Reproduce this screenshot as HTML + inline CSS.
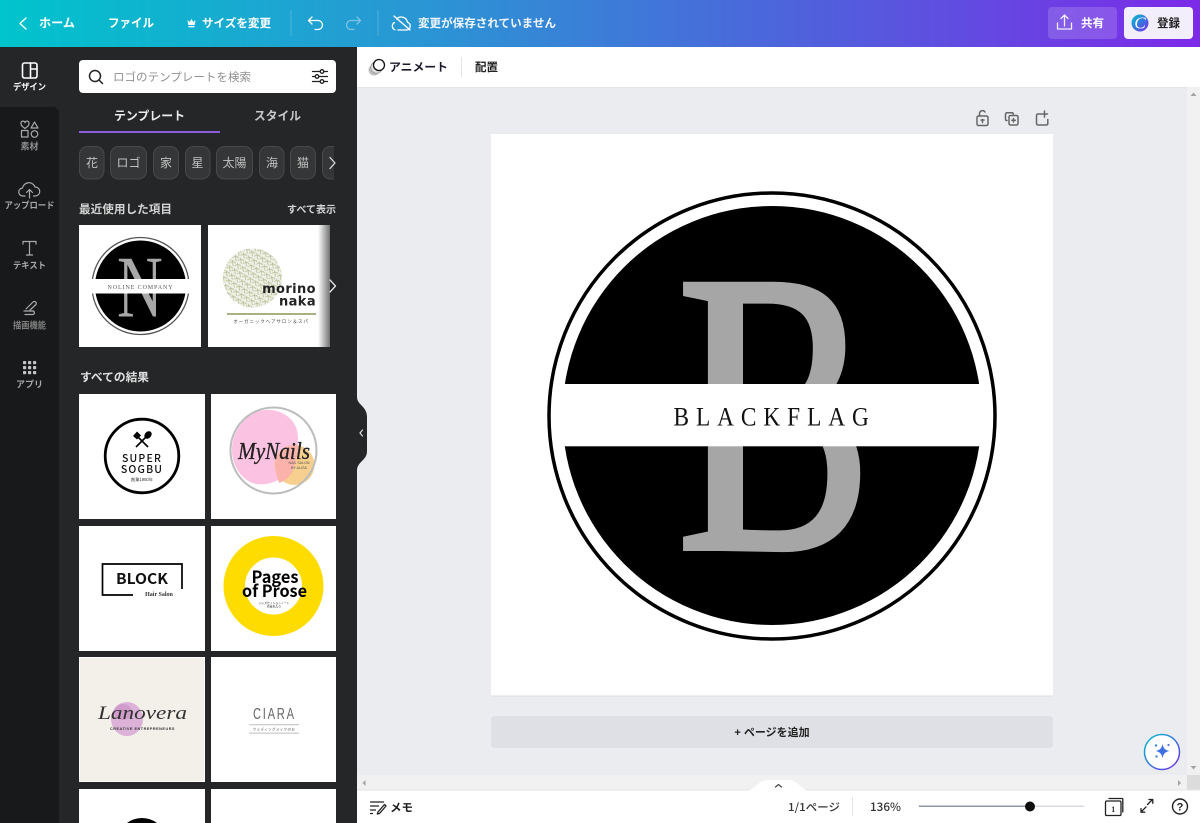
<!DOCTYPE html>
<html lang="ja"><head><meta charset="utf-8"><title>Canva</title>
<style>
html,body{margin:0;padding:0;width:1200px;height:823px;overflow:hidden;background:#ebecf0}
svg{display:block;position:absolute;left:0;top:0}
text{font-family:"Liberation Sans","Noto Sans CJK JP",sans-serif}
.b{font-weight:700}
.s{font-family:"Liberation Serif","Noto Serif CJK SC",serif}
.n{font-family:"Noto Sans CJK JP",sans-serif}
.w{fill:#fff}
.rail{fill:#a8a8a8;font-size:9px;font-weight:700;text-anchor:middle}
.chip{fill:#353637;stroke:#48494a}
.cht{fill:#c2c2c2;font-size:12px;text-anchor:middle}
.ic{fill:none;stroke:#fff;stroke-width:1.3;stroke-linecap:round;stroke-linejoin:round}
.ig{fill:none;stroke:#aaa;stroke-width:1.2;stroke-linecap:round;stroke-linejoin:round}
.id{fill:none;stroke:#222;stroke-width:1.3;stroke-linecap:round;stroke-linejoin:round}
.ie{fill:none;stroke:#666;stroke-width:1.5;stroke-linecap:round;stroke-linejoin:round}
</style></head><body>
<svg width="1200" height="823" viewBox="0 0 1200 823" xmlns="http://www.w3.org/2000/svg">
<defs>
<linearGradient id="hd" x1="0" y1="0" x2="1" y2="0"><stop offset="0" stop-color="#00c4cc"/><stop offset=".35" stop-color="#2a96d4"/><stop offset=".68" stop-color="#5060dc"/><stop offset="1" stop-color="#7d2ae8"/></linearGradient>
<linearGradient id="cg" x1="0" y1="0" x2="1" y2="1"><stop offset="0" stop-color="#00c4cc"/><stop offset=".55" stop-color="#3a6fe0"/><stop offset="1" stop-color="#7d2ae8"/></linearGradient>
<linearGradient id="fade" x1="0" y1="0" x2="1" y2="0"><stop offset="0" stop-color="#252627" stop-opacity="0"/><stop offset="1" stop-color="#252627" stop-opacity=".65"/></linearGradient>
<pattern id="leaf" width="6" height="6" patternUnits="userSpaceOnUse" patternTransform="rotate(30)"><rect width="6" height="6" fill="#eff1e6"/><path d="M0 5Q3 0 6 2.500M1 1Q3.500 4 5 6" fill="none" stroke="#b4bd94" stroke-width=".8"/></pattern>
<clipPath id="bigc"><circle cx="772" cy="415.500" r="209.500"/></clipPath>
<clipPath id="nc"><circle cx="140.500" cy="286" r="45.500"/></clipPath>
</defs>

<!-- base -->
<rect width="1200" height="823" fill="#ebecf0"/>
<rect x="0" y="47" width="357" height="776" fill="#252627"/>
<path d="M0 107H53a6 6 0 0 1 6 6V823H0Z" fill="#18191b"/>

<!-- header -->
<rect width="1200" height="47" fill="url(#hd)"/>
<path class="ic" d="M26 18l-6 5.500 6 5.500"/>
<text x="39" y="27" class="b w" font-size="12" textLength="36" lengthAdjust="spacingAndGlyphs">ホーム</text>
<text x="108" y="27" class="b w" font-size="12" textLength="46" lengthAdjust="spacingAndGlyphs">ファイル</text>
<path d="M187.500 20l2.200 2 1.800-3 1.800 3 2.200-2-.8 5h-6.400z" fill="#fff"/><rect x="188.500" y="26" width="6" height="1.300" fill="#fff"/>
<text x="202" y="27" class="b w" font-size="11.500" textLength="69" lengthAdjust="spacingAndGlyphs">サイズを変更</text>
<rect x="290.500" y="10" width="1" height="26" fill="#fff" opacity=".2"/>
<path class="ic" d="M312 17l-3.500 3.500 3.500 3.500M308.500 20.500H318a4.500 4.500 0 0 1 0 9h-3"/>
<path class="ic" opacity=".4" d="M357 17l3.500 3.500-3.500 3.500M360.500 20.500H351a4.500 4.500 0 0 0 0 9h3"/>
<rect x="377.500" y="10" width="1" height="26" fill="#fff" opacity=".2"/>
<path class="ic" d="M398 30h8.500a4 4 0 0 0 1-7.800 6.500 6.500 0 0 0-11-3.200M394.500 22.500a4 4 0 0 0 .5 7.300M394 16l16 14"/>
<text x="418" y="27" class="b" fill="#f2f6fc" font-size="11.500" textLength="138" lengthAdjust="spacingAndGlyphs">変更が保存されていません</text>

<rect x="1048" y="7" width="69" height="32" rx="4" fill="#fff" fill-opacity=".16"/>
<path class="ic" opacity=".9" d="M1064.500 26V16M1061 18.500l3.500-3.500 3.500 3.500M1057.500 23v6h14v-6"/>
<text x="1081" y="27" class="b w" font-size="11.500" textLength="23" lengthAdjust="spacingAndGlyphs">共有</text>
<rect x="1124" y="7" width="69" height="32" rx="4" fill="#f3eefc"/>
<circle cx="1140" cy="23" r="8.500" fill="url(#cg)"/>
<text x="1140" y="28.500" class="s w" font-size="17" font-style="italic" text-anchor="middle">C</text>
<text x="1157" y="27" class="b" fill="#222" font-size="11.500" textLength="23" lengthAdjust="spacingAndGlyphs">登録</text>

<!-- rail -->
<g class="ic" style="stroke-width:1.600"><rect x="22.500" y="63" width="14.500" height="15" rx="2"/><path d="M30.500 63v15M30.500 69h6.500"/></g>
<text x="29.500" y="90" class="rail" style="fill:#fff" textLength="33" lengthAdjust="spacingAndGlyphs">デザイン</text>
<g class="ig"><path d="M25 128.500c-3.500-2.500-4-3.500-4-5a2 2 0 0 1 4-.8 2 2 0 0 1 4 .8c0 1.500-.500 2.500-4 5z"/><path d="M34.500 122l3.500 6h-7z"/><rect x="21.500" y="130.500" width="6.500" height="6.500"/><circle cx="34.500" cy="134" r="3.300"/></g>
<text x="29.500" y="149.500" class="rail" style="fill:#909090">素材</text>
<g class="ig"><path d="M25 196h-2a4 4 0 0 1-.500-8 6.500 6.500 0 0 1 12.500-1 4.500 4.500 0 0 1 .500 9h-2M29.500 198v-8M26.500 192.500l3-3 3 3"/></g>
<text x="29.500" y="208.500" class="rail" style="fill:#a8a8a8" textLength="50" lengthAdjust="spacingAndGlyphs">アップロード</text>
<g class="ig"><path d="M23 244v-2.500h13v2.500M29.500 241.500V255M26.500 255h6"/></g>
<text x="29.500" y="268.500" class="rail" style="fill:#a8a8a8" textLength="33" lengthAdjust="spacingAndGlyphs">テキスト</text>
<g class="ig"><path d="M26 309l7-7c2-1.500 4 .5 3 2.500l-6 5.500M24 311h9a1.800 1.800 0 0 1 0 3.500h-8"/></g>
<text x="29.500" y="328.500" class="rail" style="fill:#808080" textLength="33" lengthAdjust="spacingAndGlyphs">描画機能</text>
<g fill="#c4c4c4"><rect x="23" y="361" width="3.200" height="3.200" rx=".8"/><rect x="28" y="361" width="3.200" height="3.200" rx=".8"/><rect x="33" y="361" width="3.200" height="3.200" rx=".8"/><rect x="23" y="366" width="3.200" height="3.200" rx=".8"/><rect x="28" y="366" width="3.200" height="3.200" rx=".8"/><rect x="33" y="366" width="3.200" height="3.200" rx=".8"/><rect x="23" y="371" width="3.200" height="3.200" rx=".8"/><rect x="28" y="371" width="3.200" height="3.200" rx=".8"/><rect x="33" y="371" width="3.200" height="3.200" rx=".8"/></g>
<text x="29.500" y="387.500" class="rail">アプリ</text>

<!-- search -->
<rect x="79" y="60" width="257" height="33" rx="4" fill="#fff"/>
<g class="id" style="stroke-width:1.500"><circle cx="95" cy="76" r="5.500"/><path d="M99 80l3.500 3.500"/></g>
<text x="113" y="81" fill="#909090" font-size="11.500" textLength="138" lengthAdjust="spacingAndGlyphs">ロゴのテンプレートを検索</text>
<g class="id"><path d="M312.500 71.500h15M312.500 76.500h15M312.500 81.500h15"/><circle cx="322" cy="71.500" r="1.800" fill="#fff"/><circle cx="317" cy="76.500" r="1.800" fill="#fff"/><circle cx="322" cy="81.500" r="1.800" fill="#fff"/></g>

<!-- tabs -->
<text x="114" y="120" class="b" fill="#ececec" font-size="12" textLength="71" lengthAdjust="spacingAndGlyphs">テンプレート</text>
<text x="254" y="120" class="b" fill="#c8c8c8" font-size="12" textLength="47" lengthAdjust="spacingAndGlyphs">スタイル</text>
<rect x="79" y="131" width="141" height="2" fill="#8b5cdc"/>

<!-- chips -->
<rect class="chip" x="79.500" y="146.500" width="24.500" height="32.500" rx="8"/><text class="cht" x="92" y="167">花</text>
<rect class="chip" x="110.500" y="146.500" width="36" height="32.500" rx="8"/><text class="cht" x="128.500" y="167">ロゴ</text>
<rect class="chip" x="153.500" y="146.500" width="25" height="32.500" rx="8"/><text class="cht" x="166" y="167">家</text>
<rect class="chip" x="185.500" y="146.500" width="24.500" height="32.500" rx="8"/><text class="cht" x="197.500" y="167">星</text>
<rect class="chip" x="216.500" y="146.500" width="36" height="32.500" rx="8"/><text class="cht" x="234.500" y="167">太陽</text>
<rect class="chip" x="259.500" y="146.500" width="24.500" height="32.500" rx="8"/><text class="cht" x="272" y="167">海</text>
<rect class="chip" x="290.500" y="146.500" width="25" height="32.500" rx="8"/><text class="cht" x="303" y="167">猫</text>
<rect class="chip" x="322.500" y="146.500" width="20" height="32.500" rx="8"/>
<rect x="334" y="145" width="10" height="35" fill="#252627"/>
<path class="ic" style="stroke:#ddd" d="M330 157.500l5 5.500-5 5.500"/>

<!-- recent -->
<text x="79" y="213" class="b" fill="#d4d4d4" font-size="11.500" textLength="93" lengthAdjust="spacingAndGlyphs">最近使用した項目</text>
<text x="287" y="213" class="b" fill="#d4d4d4" font-size="10" textLength="49" lengthAdjust="spacingAndGlyphs">すべて表示</text>

<rect x="79" y="225" width="122" height="122" fill="#fff"/>
<circle cx="140.500" cy="286" r="48.500" fill="none" stroke="#555" stroke-width="1.300"/>
<circle cx="140.500" cy="286" r="45.500" fill="#000"/>
<g clip-path="url(#nc)"><text x="0" y="316.500" class="s" fill="#a8a8a8" font-size="88" transform="translate(117 0) scale(.72 1)">N</text></g>
<rect x="91" y="279" width="99" height="14.500" fill="#fff"/>
<text x="140.500" y="289" class="s" fill="#555" font-size="6" text-anchor="middle" letter-spacing=".9">NOLINE COMPANY</text>

<rect x="208" y="225" width="122" height="122" fill="#fff"/>
<circle cx="252.500" cy="278" r="29.500" fill="url(#leaf)"/>
<text x="316" y="293" class="b" fill="#222" style="font-family:'DejaVu Sans',sans-serif" font-size="13" text-anchor="end" letter-spacing=".4">morino</text>
<text x="316" y="305.500" class="b" fill="#222" style="font-family:'DejaVu Sans',sans-serif" font-size="13" text-anchor="end" letter-spacing=".4">naka</text>
<rect x="227" y="313" width="89" height="2" fill="#a9b085"/>
<text x="271" y="323" fill="#444" font-size="4.600" text-anchor="middle" letter-spacing=".8">オーガニックヘアサロン＆スパ</text>
<rect x="318" y="225" width="12" height="122" fill="url(#fade)"/>
<path class="ic" style="stroke:#e6e6e6" d="M330 280l5.500 6-5.500 6"/>

<text x="80" y="381" class="b" fill="#e0e0e0" font-size="11.500" textLength="69" lengthAdjust="spacingAndGlyphs">すべての結果</text>

<!-- results -->
<rect x="79" y="394" width="126" height="125" fill="#fff"/>
<rect x="211" y="394" width="125" height="125" fill="#fff"/>
<rect x="79" y="526" width="126" height="125" fill="#fff"/>
<rect x="211" y="526" width="125" height="125" fill="#fff"/>
<rect x="79" y="657" width="126" height="125" fill="#fff"/>
<rect x="211" y="657" width="125" height="125" fill="#fff"/>
<rect x="79" y="789" width="126" height="34" fill="#fff"/>
<rect x="211" y="789" width="125" height="34" fill="#fff"/>

<!-- super sogbu -->
<circle cx="142" cy="456" r="36.800" fill="none" stroke="#000" stroke-width="2.800"/>
<path d="M135 434l13 13M149 434l-13 13" stroke="#000" stroke-width="1.600" fill="none"/>
<ellipse cx="148" cy="435" rx="3.200" ry="4.200" transform="rotate(42 148 435)" fill="#000"/>
<path d="M133 436l4-4.500 4 4-4 4z" fill="#000"/>
<text x="142" y="462" class="n" font-weight="500" font-size="10.500" fill="#111" text-anchor="middle" letter-spacing="1.200">SUPER</text>
<text x="142" y="473" class="n" font-weight="500" font-size="10.500" fill="#111" text-anchor="middle" letter-spacing="1.200">SOGBU</text>
<text x="142" y="481" font-size="4.200" fill="#333" text-anchor="middle">創業1950年</text>

<!-- my nails -->
<path d="M232 450c0-22 18-42 38-40 16 1 28 12 28 28 0 8 1 18-4 26-8 14-22 22-38 20-14-3-24-18-24-34z" fill="#fcc2e2"/>
<circle cx="294.500" cy="465" r="20" fill="#f7cf8e"/>
<path d="M297 445.200a20 20 0 0 0-22 19.800c0 6 2 10 4 18 12-4 18-16 19-38z" fill="#fbb2aa"/>
<circle cx="273.500" cy="450.500" r="43" fill="none" stroke="#bcbcbc" stroke-width="2"/>
<text x="238" y="459" class="s" font-style="italic" font-size="24" fill="#222" stroke="#222" stroke-width=".3" textLength="72" lengthAdjust="spacingAndGlyphs">MyNails</text>
<text x="299" y="464" font-size="3.600" fill="#555" text-anchor="middle">NAIL SALON</text>
<text x="299" y="469" font-size="3.600" fill="#555" text-anchor="middle">BY ALISA</text>

<!-- block -->
<path d="M133 595H102.500V564H182V589" fill="none" stroke="#000" stroke-width="1.700"/>
<text x="142" y="584" class="n b" font-size="15" fill="#111" text-anchor="middle" textLength="52" lengthAdjust="spacingAndGlyphs">BLOCK</text>
<text x="159" y="596" class="s b" font-size="6" fill="#333" text-anchor="middle">Hair Salon</text>

<!-- pages of prose -->
<circle cx="273.500" cy="586" r="39.250" fill="none" stroke="#ffdc00" stroke-width="21.500"/>
<text x="275" y="583" class="n b" font-size="16.500" fill="#000" text-anchor="middle" textLength="47" lengthAdjust="spacingAndGlyphs">Pages</text>
<text x="274.500" y="597" class="n b" font-size="16.500" fill="#000" text-anchor="middle" textLength="65" lengthAdjust="spacingAndGlyphs">of Prose</text>
<text x="274" y="604" font-size="2.800" fill="#222" text-anchor="middle">ジャズセッションノート</text>
<text x="274" y="607.500" font-size="2.800" fill="#222" text-anchor="middle">作者名入り</text>

<!-- lanovera -->
<rect x="80" y="658" width="124" height="123" fill="#f3f0ea"/>
<ellipse cx="127" cy="719" rx="16" ry="17" fill="#dcb2d8"/>
<ellipse cx="123" cy="712" rx="9" ry="8" fill="#d09ccb"/>
<text x="98" y="719" class="s" font-style="italic" font-size="19" fill="#333" textLength="89" lengthAdjust="spacingAndGlyphs">Lanovera</text>
<text x="142.500" y="730" class="b" font-size="3.800" fill="#333" text-anchor="middle" letter-spacing=".5">CREATIVE ENTREPRENEURS</text>

<!-- ciara -->
<text x="0" y="719" font-size="15.500" fill="#666" transform="translate(253 0) scale(.72 1)" textLength="57" lengthAdjust="spacing">CIARA</text>
<rect x="249" y="724" width="50" height="1.300" fill="#ccc"/>
<rect x="249" y="732.500" width="50" height="1.300" fill="#ccc"/>
<text x="274" y="730.500" font-size="3.500" fill="#555" text-anchor="middle" letter-spacing=".4">ウェディングメイクのお</text>

<!-- row 4 -->
<path d="M127 823A25 25 0 0 1 157 823Z" fill="#000"/>

<!-- collapse handle -->
<path d="M357 397c0 8 10 9 10 20v34c0 10-10 10-10 20z" fill="#252627"/>
<path d="M362.500 430l-2.500 3 2.500 3" fill="none" stroke="#ddd" stroke-width="1.200" stroke-linecap="round"/>

<!-- toolbar -->
<rect x="357" y="47" width="843" height="40" fill="#fff"/>
<rect x="357" y="87" width="843" height="1" fill="#e3e4e8"/>
<circle cx="374" cy="70" r="5.500" fill="#bdbdbd"/><circle cx="376.500" cy="67.500" r="5.800" fill="#dedede" stroke="#999" stroke-width=".9"/><circle cx="379" cy="65" r="5.500" fill="#fff" stroke="#111" stroke-width="1.300"/>
<text x="389" y="71" class="b" fill="#1a1a2a" font-size="11.500" textLength="59" lengthAdjust="spacingAndGlyphs">アニメート</text>
<rect x="461" y="57" width="1" height="20" fill="#e3e4e8"/>
<text x="475" y="71" class="b" fill="#222" font-size="11.500" textLength="23" lengthAdjust="spacingAndGlyphs">配置</text>

<!-- page actions -->
<g class="ie"><rect x="977" y="116" width="11" height="9.500" rx="1.500"/><path d="M979.500 116v-2.500a3 3 0 0 1 5.500-1.500"/><path d="M982.500 119.500v3M981 120h3"/></g>
<g class="ie"><rect x="1009" y="115.500" width="9" height="9.500" rx="1.500"/><path d="M1007 120.500h-.2a1.300 1.300 0 0 1-1.300-1.300v-5a1.500 1.500 0 0 1 1.500-1.500h5a1.300 1.300 0 0 1 1.300 1.300"/><path d="M1013.500 118.500v3.500M1011.800 120.300h3.500"/></g>
<g class="ie"><path d="M1041 114h-3a1.500 1.500 0 0 0-1.500 1.500v8a1.500 1.500 0 0 0 1.500 1.500h8.500a1.500 1.500 0 0 0 1.300-1.500v-4M1044.500 111v6M1041.500 114h6"/></g>

<!-- page -->
<rect x="491" y="134" width="562" height="562" fill="#fff"/>
<rect x="491" y="695.500" width="562" height="1" fill="#dcdde2"/>
<circle cx="772" cy="416" r="223" fill="none" stroke="#000" stroke-width="3.500"/>
<circle cx="772" cy="415.500" r="209.500" fill="#000"/>
<g clip-path="url(#bigc)">
<text x="0" y="549" class="s" font-size="405" fill="#a6a6a6" stroke="#a6a6a6" stroke-width="4" transform="translate(676 0) scale(.73 1)">B</text>
<rect x="710" y="288" width="33" height="254" fill="#a6a6a6"/>
</g>
<rect x="557" y="384" width="430" height="62.300" fill="#fff"/>
<text x="0" y="425.500" class="s" font-size="26.500" fill="#111" transform="translate(673.500 0) scale(.88 1)" textLength="222" lengthAdjust="spacing">BLACKFLAG</text>

<!-- add page -->
<rect x="491" y="716" width="562" height="32" rx="3" fill="#dfe0e5"/>
<text x="772" y="736" class="b" fill="#222" font-size="11" text-anchor="middle">+ ページを追加</text>

<!-- scrollbars -->
<rect x="357" y="775" width="843" height="15" fill="#f1f1f1"/>
<rect x="1187" y="87" width="13" height="703" fill="#f1f1f1"/>
<rect x="1187" y="775" width="13" height="15" fill="#dcdcdc"/>
<path d="M1190.500 96l3-3.500 3 3.500z" fill="#a3a3a3"/><path d="M1190.500 766l3 3.500 3-3.500z" fill="#a3a3a3"/>
<path d="M365.500 780v6l-3-3z" fill="#a3a3a3"/><path d="M1178 780v6l3-3z" fill="#a3a3a3"/>

<!-- AI button -->
<circle cx="1162" cy="752" r="17.500" fill="#fff" stroke="url(#cg)" stroke-width="1.500"/>
<path d="M1162.500 744c1 4.500 2.500 6 7 7-4.500 1-6 2.500-7 7-1-4.500-2.500-6-7-7 4.500-1 6-2.500 7-7z" fill="#3f6fe0"/>
<circle cx="1156" cy="745.500" r="1.200" fill="#3f86e0"/><circle cx="1156.500" cy="756.500" r="1.200" fill="#3f86e0"/><circle cx="1168.500" cy="745" r="1.100" fill="#5a70e0"/>

<!-- bottom bar -->
<rect x="357" y="790" width="843" height="33" fill="#fff"/>
<rect x="357" y="789.500" width="843" height="1" fill="#e3e4e8"/>
<path d="M746 791c8 0 12-11 22-11h20c10 0 14 11 22 11z" fill="#fff"/>
<path d="M775.500 787l3-2.500 3 2.500" fill="none" stroke="#444" stroke-width="1.200" stroke-linecap="round"/>
<g class="id"><path d="M370.500 802h13M370.500 806h8M370.500 810h5M370.500 813.500h2M378 812l6.500-7.500 1.500 1.500-6.500 7.500-2.200.5z"/></g>
<text x="390" y="811.500" class="b" fill="#222" font-size="11.500" textLength="23" lengthAdjust="spacingAndGlyphs">メモ</text>
<text x="788" y="811" class="n" font-weight="500" fill="#333" font-size="11" textLength="52" lengthAdjust="spacingAndGlyphs">1/1ページ</text>
<rect x="852" y="797" width="1" height="19" fill="#e3e4e8"/>
<text x="870" y="811" class="n" font-weight="500" fill="#333" font-size="11.500" textLength="31" lengthAdjust="spacingAndGlyphs">136%</text>
<rect x="919" y="805.500" width="111" height="1.500" fill="#8f95a8"/>
<rect x="1030" y="805.500" width="54" height="1.500" fill="#d6d8df"/>
<circle cx="1030" cy="806.500" r="5" fill="#0e0e0e"/>
<g class="id"><path d="M1109 798.500h13a.8.8 0 0 1 .8.8V812"/><rect x="1105.500" y="801" width="15.500" height="14.500" rx="1.300" fill="#fff"/></g>
<text x="1113.200" y="812" class="s b" fill="#333" font-size="8" text-anchor="middle">1</text>
<g class="id"><path d="M1147.500 804.500l5-5M1149 799.500h3.800v3.800M1146 807l-5 5M1141 808.500v3.700h3.700"/></g>
<circle cx="1180" cy="806.500" r="7.500" class="id" style="stroke-width:1.400"/>
<text x="1180" y="810.500" class="b" fill="#222" font-size="11" text-anchor="middle">?</text>
</svg>
</body></html>
